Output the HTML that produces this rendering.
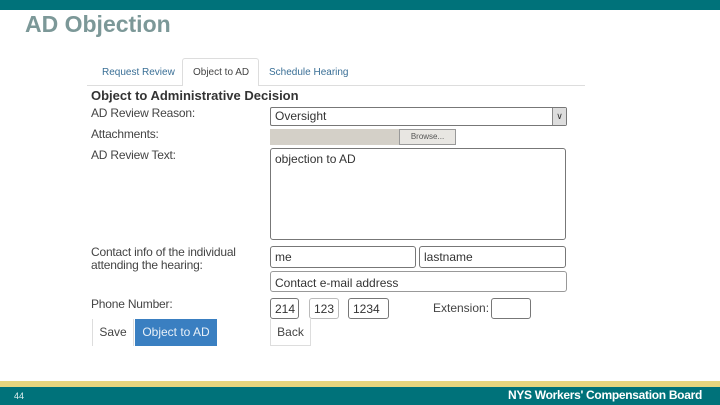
<!DOCTYPE html>
<html><head><style>
*{margin:0;padding:0;box-sizing:border-box}
body{width:720px;height:405px;position:relative;background:#fff;font-family:"Liberation Sans",sans-serif;overflow:hidden;color:#333}
.a{position:absolute}
.lbl{position:absolute;left:91px;font-size:12px;color:#444;letter-spacing:-0.2px}
.box{position:absolute;border:1px solid #777;border-radius:3px;background:#fff;font-size:12px;color:#333;padding-left:4px}
</style></head><body>
<div class="a" style="left:0;top:0;width:720px;height:10px;background:#00727a"></div>
<div class="a" style="left:25px;top:11px;font-size:23px;font-weight:bold;color:#7c9898">AD Objection</div>

<div class="a" style="left:87px;top:85px;width:498px;height:1px;background:#ddd"></div>
<div class="a" style="left:102px;top:67px;font-size:10px;color:#3a6f96">Request Review</div>
<div class="a" style="left:182px;top:58px;width:77px;height:28px;border:1px solid #ddd;border-bottom:none;background:#fff;border-radius:3px 3px 0 0"></div>
<div class="a" style="left:193px;top:67px;font-size:10px;color:#444">Object to AD</div>
<div class="a" style="left:269px;top:67px;font-size:10px;color:#3a6f96">Schedule Hearing</div>

<div class="a" style="left:91px;top:88px;font-size:13px;font-weight:bold;color:#333">Object to Administrative Decision</div>
<div class="lbl" style="top:106px">AD Review Reason:</div>
<div class="lbl" style="top:127px">Attachments:</div>
<div class="lbl" style="top:148px">AD Review Text:</div>
<div class="lbl" style="top:246px;line-height:13px">Contact info of the individual<br>attending the hearing:</div>
<div class="lbl" style="top:297px">Phone Number:</div>

<div class="box" style="left:270px;top:107px;width:297px;height:19px;line-height:17px;border-radius:2px">Oversight</div>
<div class="a" style="left:552px;top:108px;width:14px;height:17px;background:#ddd;border-left:1px solid #888;font-size:9px;text-align:center;line-height:17px">&#8744;</div>
<div class="a" style="left:270px;top:129px;width:186px;height:16px;background:#d4d0c8"></div>
<div class="a" style="left:399px;top:129px;width:57px;height:16px;background:#e8e6e2;border:1px solid #999;font-size:8px;text-align:center;line-height:14px;color:#555">Browse...</div>
<div class="box" style="left:270px;top:148px;width:296px;height:92px;padding-top:3px">objection to AD</div>
<div class="box" style="left:270px;top:246px;width:146px;height:22px;line-height:21px">me</div>
<div class="box" style="left:419px;top:246px;width:147px;height:22px;line-height:21px">lastname</div>
<div class="box" style="left:270px;top:271px;width:297px;height:21px;line-height:22px;border-color:#999">Contact e-mail address</div>
<div class="box" style="left:270px;top:298px;width:29px;height:21px;line-height:21px">214</div>
<div class="box" style="left:309px;top:298px;width:30px;height:21px;line-height:21px;border-color:#bbb">123</div>
<div class="box" style="left:348px;top:298px;width:41px;height:21px;line-height:21px">1234</div>
<div class="a" style="left:433px;top:301px;font-size:12px;color:#444">Extension:</div>
<div class="box" style="left:491px;top:298px;width:40px;height:21px"></div>

<div class="a" style="left:92px;top:319px;width:42px;height:27px;border-left:1px solid #ddd;border-right:1px solid #ddd;font-size:12px;text-align:center;line-height:27px;color:#444">Save</div>
<div class="a" style="left:135px;top:319px;width:82px;height:27px;background:#3a7fc1;color:#e8f0f8;font-size:12px;text-align:center;line-height:27px">Object to AD</div>
<div class="a" style="left:270px;top:319px;width:41px;height:27px;border:1px solid #ddd;border-top:none;font-size:12px;text-align:center;line-height:27px;color:#444">Back</div>

<div class="a" style="left:0;top:381px;width:720px;height:6px;background:#e6d57e"></div>
<div class="a" style="left:0;top:387px;width:720px;height:18px;background:#00727a"></div>
<div class="a" style="left:14px;top:391px;font-size:9px;color:#e0f0f0">44</div>
<div class="a" style="right:18px;top:388px;font-size:12px;font-weight:bold;color:#fff;letter-spacing:-0.3px">NYS Workers' Compensation Board</div>
</body></html>
